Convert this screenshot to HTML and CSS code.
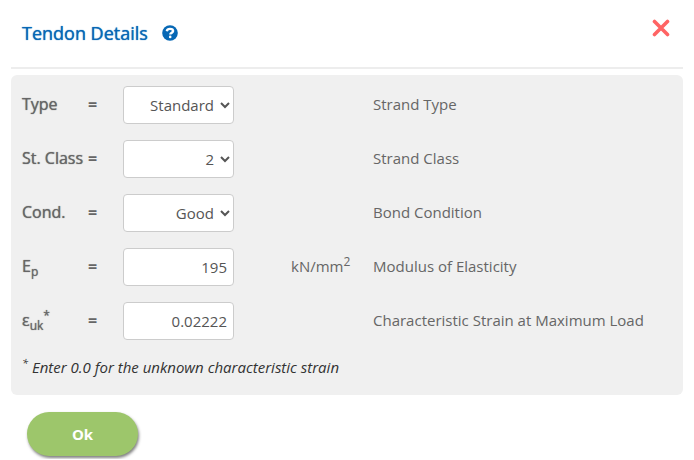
FILE: index.html
```html
<!DOCTYPE html>
<html lang="en">
<head>
    <meta charset="UTF-8" />
    <meta name="viewport" content="width=device-width, initial-scale=1" />
    <title>Tendon Details</title>
    <link rel="stylesheet" href="styles.css">
</head>
<body>

    <form class="dialog">
        <div class="header">
            <h1>Tendon Details</h1>
            <a class="help" href="#help" aria-label="Help">
                <svg viewBox="0 0 16 16" width="16" height="16">
                    <circle cx="8" cy="8" r="7.8" fill="#0768b5" />
                    <path d="M4.800 6.200C5.100 4.600 6.300 3.900 8 3.900c1.800 0 3.100.9 3.100 2.200 0 1.800-2.800 1.700-2.800 3.300" fill="none" stroke="#fff" stroke-width="2.400" />
                    <circle cx="8.200" cy="11.900" r="1.300" fill="#fff" />
                </svg>
            </a>
            <button type="button" class="close" aria-label="Close">
                <svg viewBox="0 0 18 18" width="18" height="18">
                    <path d="M2.500 2.500l13 13M15.500 2.500l-13 13" stroke="#ff6464" stroke-width="3.600" stroke-linecap="round" />
                </svg>
            </button>
        </div>

        <div class="panel">
            <div class="row">
                <label for="type">Type</label>
                <span class="equals">=</span>
                <select id="type">
                    <option>Standard</option>
                    <option>Compact</option>
                </select>
                <span class="unit"></span>
                <span class="desc">Strand Type</span>
            </div>
            <div class="row">
                <label for="st-class">St. Class</label>
                <span class="equals">=</span>
                <select id="st-class">
                    <option>1</option>
                    <option selected>2</option>
                </select>
                <span class="unit"></span>
                <span class="desc">Strand Class</span>
            </div>
            <div class="row">
                <label for="cond">Cond.</label>
                <span class="equals">=</span>
                <select id="cond">
                    <option>Good</option>
                    <option>Poor</option>
                </select>
                <span class="unit"></span>
                <span class="desc">Bond Condition</span>
            </div>
            <div class="row">
                <label for="ep">E<sub>p</sub></label>
                <span class="equals">=</span>
                <input type="text" id="ep" value="195">
                <span class="unit">kN/mm<sup>2</sup></span>
                <span class="desc">Modulus of Elasticity</span>
            </div>
            <div class="row">
                <label for="euk">ε<sub>uk</sub><sup>*</sup></label>
                <span class="equals">=</span>
                <input type="text" id="euk" value="0.02222">
                <span class="unit"></span>
                <span class="desc">Characteristic Strain at Maximum Load</span>
            </div>
            <p class="note"><sup>*</sup> Enter 0.0 for the unknown characteristic strain</p>
        </div>

        <button type="button" class="btn">Ok</button>
    </form>

</body>
</html>
```
FILE: styles.css
```css
* {
    box-sizing: border-box;
}
body {
    font-family: "Open Sans", sans-serif;
    font-size: 15px;
    color: #666;
    background-color: #fff;
    margin: 0;
}
.dialog {
    padding: 0 11px 3px;
}
.header {
    display: flex;
    align-items: center;
    height: 69px;
    padding: 0 13px 2px 11px;
    border-bottom: 2px solid #ededed;
}
.header h1 {
    margin: 0;
    font-size: 18px;
    font-weight: normal;
    color: #0768b5;
    text-shadow: 0 0 1px #0768b5;
}
.help {
    display: flex;
    margin-left: 14px;
}
.close {
    display: flex;
    margin-left: auto;
    margin-bottom: 10px;
    padding: 0;
    border: none;
    background: none;
    cursor: pointer;
}
.panel {
    margin-top: 6px;
    padding: 11px 11px 17px;
    background-color: #f0f0f0;
    border-radius: 6px;
}
.row {
    display: grid;
    grid-template-columns: 66px 35px 111px 57px 82px 1fr;
    align-items: center;
    height: 38px;
    margin-bottom: 16px;
}
.row label {
    padding-bottom: 3px;
    font-size: 16px;
    line-height: 24px;
    white-space: nowrap;
    text-shadow: 0 0 1px #666;
}
.equals {
    padding-bottom: 2px;
    font-size: 16px;
    font-weight: bold;
}
.row select,
.row input {
    width: 100%;
    height: 38px;
    padding: 0 6px;
    border: 1px solid #ccc;
    border-radius: 4px;
    background-color: #fff;
    color: #555;
    font-family: inherit;
    font-size: 15px;
    text-align: right;
}
.row select {
    padding: 0 3px 0 0;
}
.unit {
    grid-column: 5;
    padding-bottom: 2px;
}
.desc {
    grid-column: 6;
    padding-bottom: 2px;
}
sub,
sup {
    font-size: 12px;
    line-height: 0;
}
.note {
    margin: 0;
    font-size: 15px;
    line-height: 22px;
    font-style: italic;
    color: #333;
}
.note sup {
    font-size: 11px;
}
.btn {
    display: block;
    width: 111px;
    height: 44px;
    margin: 17px 16px 0;
    padding: 0 0 1px;
    border: none;
    border-radius: 22px;
    background-color: #9dc66b;
    box-shadow: 1px 2px 3px rgba(0, 0, 0, 0.5);
    color: #fff;
    font-family: inherit;
    font-size: 15px;
    font-weight: bold;
    cursor: pointer;
}
```
